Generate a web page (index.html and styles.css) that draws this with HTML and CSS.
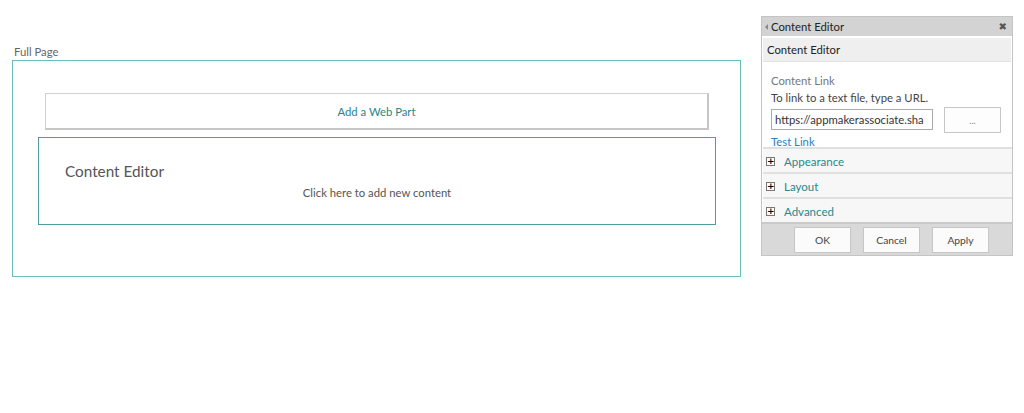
FILE: index.html
```html
<!DOCTYPE html>
<html>
<head>
<meta charset="utf-8">
<link rel="stylesheet" href="styles.css">
</head>
<body>
<div class="page">
  <div class="zone">
    <div class="zone-label">Full Page</div>
    <div class="zone-box">
      <div class="add-part">Add a Web Part</div>
      <div class="ce-part">
        <div class="ce-title">Content Editor</div>
        <div class="ce-hint">Click here to add new content</div>
      </div>
    </div>
  </div>
  <div class="tool">
    <div class="tool-head">
      <span class="tool-arrow"></span>
      <span class="tool-name">Content Editor</span>
      <span class="tool-close">&#x2716;</span>
    </div>
    <div class="tool-body">
      <div class="band">Content Editor</div>
      <div class="link-sec">
        <div class="lbl">Content Link</div>
        <div class="desc">To link to a text file, type a URL.</div>
        <div class="url-row">
          <div class="url-input">https://appmakerassociate.sha</div>
          <div class="url-btn">...</div>
        </div>
        <div class="test-link">Test Link</div>
      </div>
      <div class="sec"><span class="plus">+</span><span class="sec-name">Appearance</span></div>
      <div class="sec"><span class="plus">+</span><span class="sec-name">Layout</span></div>
      <div class="sec"><span class="plus">+</span><span class="sec-name">Advanced</span></div>
    </div>
    <div class="tool-foot">
      <div class="btn">OK</div>
      <div class="btn">Cancel</div>
      <div class="btn">Apply</div>
    </div>
  </div>
</div>
</body>
</html>
```
FILE: styles.css
```css
html, body { margin: 0; padding: 0; background: #fff; }
body { font-family: Lato, "Open Sans", "Liberation Sans", sans-serif; color: #444; }
.page { display: flex; align-items: flex-start; }
.zone { margin-left: 12px; margin-top: 43px; width: 729px; }
.zone-label { font-size: 11.3px; color: #666; margin-left: 2px; height: 17px; line-height: 17px; }
.zone-box {
  border: 1px solid #6cbcbc; height: 217px; box-sizing: border-box;
  padding-top: 32px;
}
.add-part {
  margin: 0 31px 0 32px; height: 37px; box-sizing: border-box;
  border: 1px solid #d2d2d2; border-bottom: 2px solid #c6c6c6; border-right: 2px solid #c6c6c6;
  display: flex; align-items: center; justify-content: center;
  font-size: 11.3px; color: #2b8389;
}
.ce-part {
  margin: 7px 24px 0 25px; height: 88px; box-sizing: border-box;
  border: 1px solid #4d9c9e;
}
.ce-title { font-size: 15.3px; color: #555; padding: 23px 0 0 26px; line-height: 20px; }
.ce-hint { font-size: 11.3px; color: #555; text-align: center; line-height: 16px; margin-top: 4px; }
.tool { margin-left: 20px; margin-top: 16px; width: 252px; box-sizing: border-box; }
.tool-head {
  height: 20px; background: #d3d3d3; border: 1px solid #c4c4c4; border-bottom: none;
  display: flex; align-items: center; font-size: 11.3px; color: #222; box-sizing: border-box;
}
.tool-arrow {
  width: 0; height: 0; border-top: 3px solid transparent; border-bottom: 3px solid transparent;
  border-right: 3px solid #888; margin: 0 3px 0 3px;
}
.tool-name { flex: 1; }
.tool-close { font-size: 10px; color: #555; margin-right: 5px; font-family: "DejaVu Sans", sans-serif; }
.tool-body { border-left: 1px solid #c4c4c4; border-right: 1px solid #c4c4c4; padding-top: 2px; }
.band {
  margin: 0 1px; height: 24px; background: #efefef; border-bottom: 1px solid #e2e2e2;
  font-size: 11.3px; color: #222; line-height: 24px; padding-left: 4px; box-sizing: border-box;
}
.link-sec { padding: 10px 0 0 9px; height: 85px; box-sizing: border-box; }
.lbl { font-size: 11.3px; color: #777; line-height: 17px; }
.desc { font-size: 11.3px; color: #444; line-height: 17px; }
.url-row { display: flex; align-items: flex-start; margin-top: 1px; }
.url-input {
  width: 162px; height: 21px; box-sizing: border-box; border: 1px solid #ababab;
  font-size: 11.3px; color: #333; line-height: 19px; padding-left: 3px; margin-top: 2px;
  overflow: hidden; white-space: nowrap;
}
.url-btn {
  margin-left: 11px; width: 57px; height: 26px; box-sizing: border-box;
  border: 1px solid #c6c6c6; background: #fdfdfd; font-size: 9px; color: #888;
  display: flex; align-items: center; justify-content: center;
}
.test-link { font-size: 11.3px; color: #2d7ec4; line-height: 16px; margin-top: 1px; }
.sec {
  height: 25px; border-top: 2px solid #e0e0e0; background: #f7f7f7; margin-left: 1px;
  display: flex; align-items: center; box-sizing: border-box; padding-top: 1px;
}
.plus {
  width: 9px; height: 9px; box-sizing: border-box; border: 1px solid #777; background: #fff;
  font-size: 9px; line-height: 6px; text-align: center; color: #000; margin: 0 9px 0 3px;
  font-family: "DejaVu Sans", sans-serif; font-weight: bold; overflow: hidden;
}
.sec-name { font-size: 11.5px; color: #25898c; }
.tool-foot {
  height: 34px; background: #d9d9d9; border: 1px solid #c4c4c4; border-top: 2px solid #c9c9c9; box-sizing: border-box;
  display: flex; justify-content: flex-start; gap: 12px; padding: 3px 0 0 32px;
}
.btn {
  width: 57px; height: 26px; box-sizing: border-box; border: 1px solid #c6c6c6; background: #fbfbfb;
  font-size: 10.3px; color: #444; display: flex; align-items: center; justify-content: center;
}
```
